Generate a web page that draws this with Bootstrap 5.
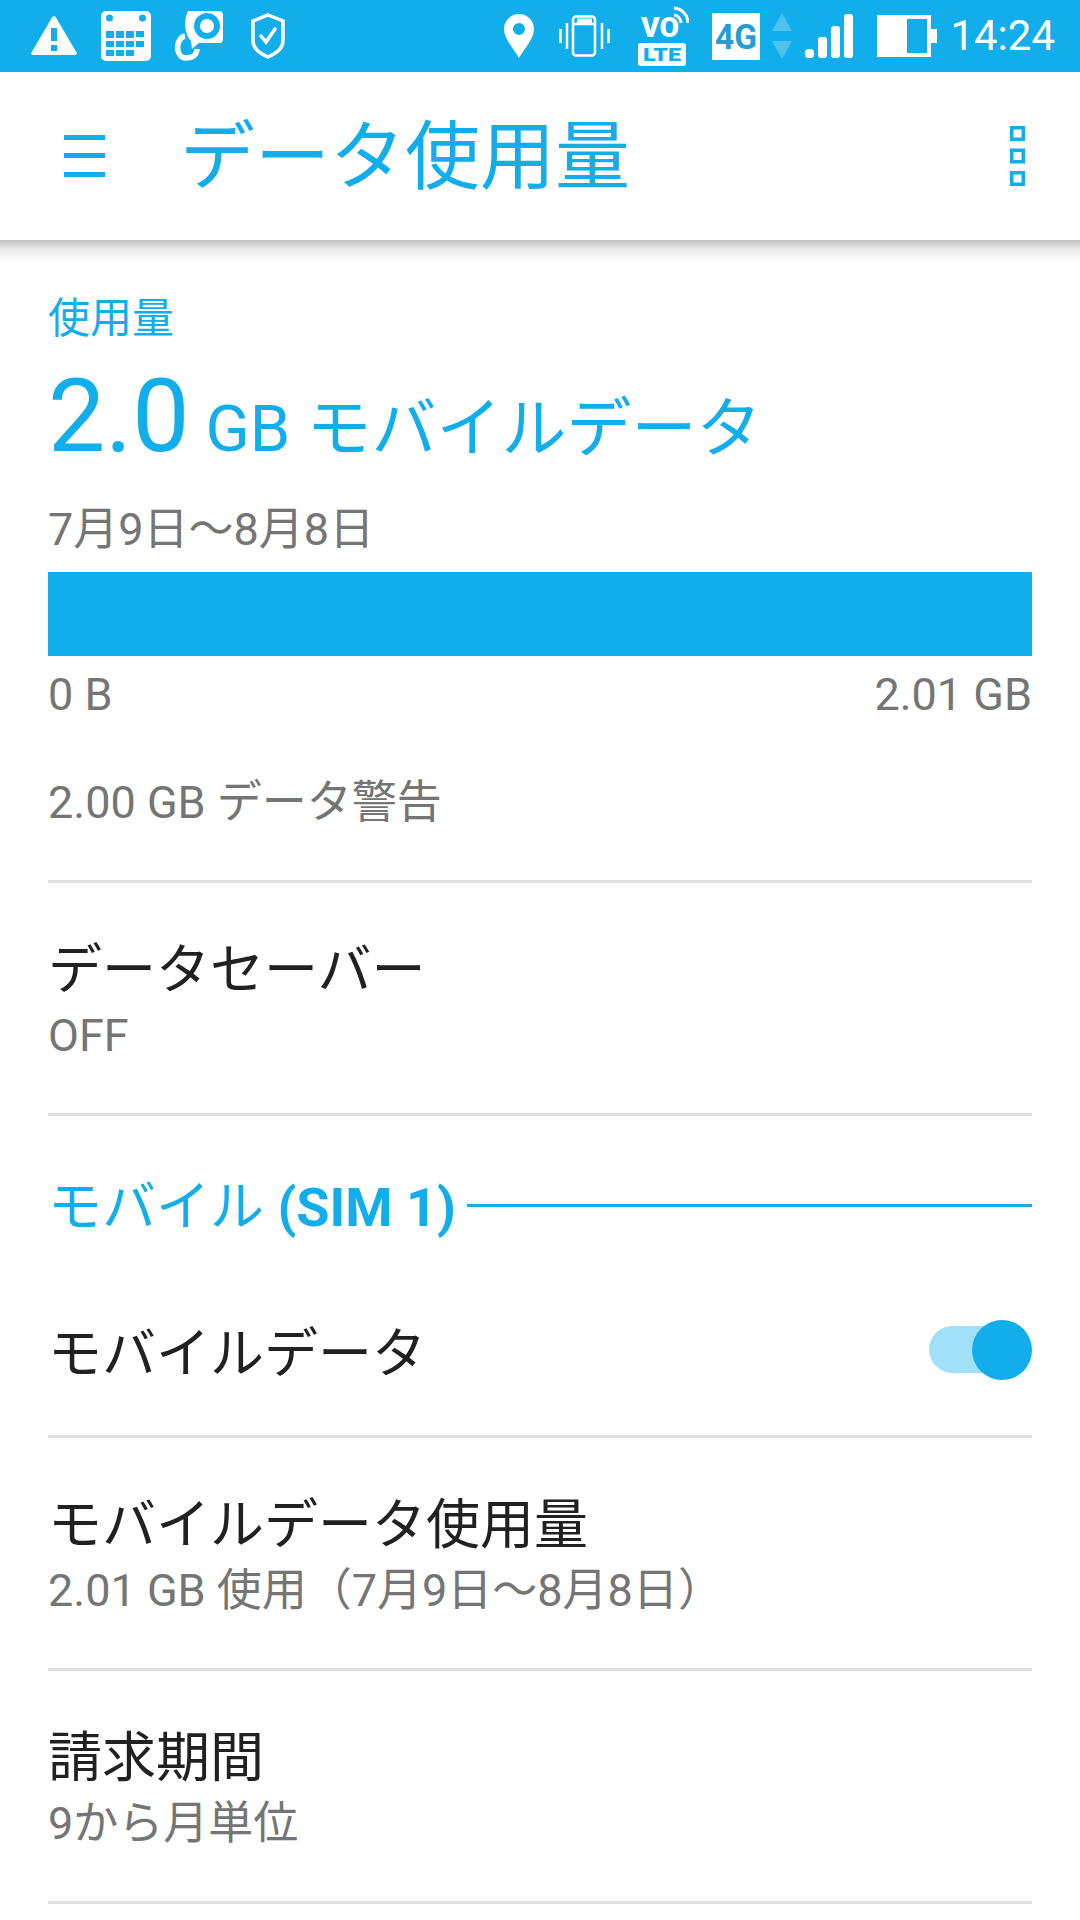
<!DOCTYPE html>
<html lang="ja">
<head>
  <meta charset="UTF-8" />
  <meta name="viewport" content="width=device-width, initial-scale=1.0" />
  <title>データ使用量</title>
  <link href="https://cdn.jsdelivr.net/npm/bootstrap@5.3.0/dist/css/bootstrap.min.css" rel="stylesheet">
  <style>
    body {
      width: 1080px;
      height: 1920px;
      overflow: hidden;
      background: #fff;
      font-family: Roboto, "Noto Sans CJK JP", sans-serif;
      color: #212121;
    }

    .status-bar {
      height: 72px;
      background: #12adeb;
      padding: 0 25px 0 31px;
    }

    .status-bar svg { display: block; flex: none; }
    .status-left { gap: 24px; }
    .gap-vibrate { margin-left: 25px; }
    .gap-volte { margin-left: 28px; }
    .gap-4g { margin-left: 23px; }
    .gap-arrows { margin-left: 12px; }
    .gap-signal { margin-left: 13px; }
    .gap-battery { margin-left: 24px; }
    .clock { color: #fff; font-size: 42px; line-height: 72px; margin-left: 13px; }

    .app-bar {
      height: 168px;
      padding: 0 55px 0 64px;
      position: relative;
    }

    .app-bar::after {
      content: "";
      position: absolute;
      left: 0;
      right: 0;
      top: 100%;
      height: 22px;
      background: linear-gradient(rgba(0, 0, 0, .24), rgba(0, 0, 0, .09) 40%, rgba(0, 0, 0, 0));
    }

    .app-title { color: #12adeb; font-size: 75px; line-height: 1; margin: 2px 0 0 75px; font-weight: 400; }

    .usage-block { padding: 56px 48px 0; height: 640px; }
    .usage-label { color: #12adeb; font-size: 42px; line-height: 46px; }
    .usage-total { color: #12adeb; font-size: 65px; line-height: 108px; margin-top: 20px; }
    .usage-total b { font-size: 102px; font-weight: 400; margin-right: 16px; }
    .usage-range { color: #757575; font-size: 45px; line-height: 52px; margin-top: 21px; }
    .usage-bar { height: 84px; background: #12adeb; margin-top: 16px; }
    .usage-scale { color: #757575; font-size: 45px; line-height: 52px; margin-top: 13px; }
    .usage-warn { color: #757575; font-size: 45px; line-height: 52px; margin-top: 56px; }

    .setting-list { padding: 0 48px; }
    .setting-row { border-top: 3px solid #e0e0e0; height: 233px; padding-top: 56px; }
    .setting-row.plain { height: 0; padding: 0; }
    .setting-name { font-size: 54px; line-height: 64px; }
    .setting-sub { color: #757575; font-size: 45px; line-height: 52px; margin-top: 7px; }

    .section-head { height: 157px; padding: 60px 0 33px; gap: 11px; }
    .section-title { color: #12adeb; font-size: 54px; line-height: 64px; }
    .section-title b { font-weight: 700; }
    .section-line { height: 3px; background: #12adeb; flex: 1; margin-bottom: 5px; }
    .switch-row { height: 162px; padding-bottom: 9px; }
    .switch-name { padding-top: 10px; }
    .switch-track { width: 99px; height: 47px; background: #a0e0f8; border-radius: 24px; position: relative; }
    .switch-knob { width: 60px; height: 60px; background: #12adeb; border-radius: 50%; position: absolute; right: -4px; top: -6px; }
  </style>
</head>
<body>
  <div class="status-bar d-flex justify-content-between align-items-center">
    <div class="status-left d-flex align-items-center">
      <!-- warning -->
      <svg width="46" height="40" viewBox="0 0 46 40"><path fill="#fff" fill-rule="evenodd" d="M21 1.500a2.300 2.300 0 0 1 4 0L45.500 36.500a1.700 1.700 0 0 1-1.500 2.500H2a1.700 1.700 0 0 1-1.500-2.500ZM20 12v13h6V12ZM20 29v6h6v-6Z"/></svg>
      <!-- calendar -->
      <svg width="50" height="50" viewBox="0 0 50 50"><path fill="#fff" fill-rule="evenodd" d="M5 0H45a5 5 0 0 1 5 5V45a5 5 0 0 1-5 5H5a5 5 0 0 1-5-5V5a5 5 0 0 1 5-5ZM5 7a3.500 3.500 0 1 0 7 0 3.500 3.500 0 1 0-7 0ZM38 7a3.500 3.500 0 1 0 7 0 3.500 3.500 0 1 0-7 0ZM5 20v7h8v-7ZM15 20v7h8v-7ZM25 20v7h8v-7ZM35 20v6h8v-6ZM5 30v6h8v-6ZM15 30v6h8v-6ZM25 30v6h8v-6ZM35 30v6h8v-6ZM5 39v6h8v-6ZM15 39v6h8v-6ZM25 39v6h8v-6Z"/></svg>
      <!-- hook -->
      <svg width="48" height="50" viewBox="0 0 48 50"><path fill="#fff" fill-rule="evenodd" d="M13 0H44a4 4 0 0 1 4 4V28a4 4 0 0 1-4 4H24l-7 6-1-8C10 24 8 10 13 0ZM19 15a13 13 0 1 0 26 0 13 13 0 1 0-26 0ZM25 15a7 7 0 1 1 14 0 7 7 0 1 1-14 0Z"/><path fill="none" stroke="#fff" stroke-width="5.500" d="M10 25C0 27 0 47 11 47c7 0 11-4 11-9"/></svg>
      <!-- shield -->
      <svg class="ms-1" width="34" height="46" viewBox="0 0 34 46"><path fill="none" stroke="#fff" stroke-width="3.500" d="M17 2 32 8V28C32 36 24 41 17 44 10 41 2 36 2 28V8Z"/><path fill="none" stroke="#fff" stroke-width="3.500" stroke-linecap="round" d="M10 23l5 6 9-13"/></svg>
    </div>
    <div class="d-flex align-items-center">
      <!-- location -->
      <svg width="30" height="44" viewBox="0 0 30 44"><path fill="#fff" fill-rule="evenodd" d="M15 0A15 15 0 0 1 30 15C30 25 20 35 15 44 10 35 0 25 0 15A15 15 0 0 1 15 0ZM9 15a6 6 0 1 0 12 0 6 6 0 1 0-12 0Z"/></svg>
      <!-- vibrate -->
      <svg class="gap-vibrate" width="51" height="42" viewBox="0 0 51 42"><g fill="none" stroke="#fff" stroke-width="2.500"><rect x="14" y="1.500" width="22" height="39" rx="3"/><path d="M14 9H36M1.500 14V28M8 8V34M43 8V34M49.500 14V28"/></g><path fill="#fff" d="M18 3.500h15V8H18Z"/></svg>
      <!-- volte -->
      <svg class="gap-volte" width="51" height="60" viewBox="0 0 51 60" font-family="Roboto, sans-serif" font-weight="900"><text x="3" y="31" font-size="28" fill="#fff" textLength="38" lengthAdjust="spacingAndGlyphs">VO</text><path fill="none" stroke="#fff" stroke-width="3" d="M36 9a8 8 0 0 1 7 8M36 2a15 15 0 0 1 14 15"/><rect y="37" x="0" width="48" height="23" rx="3" fill="#fff"/><text x="24" y="55" font-size="18" fill="#12adeb" text-anchor="middle" textLength="38" lengthAdjust="spacingAndGlyphs">LTE</text></svg>
      <!-- 4g -->
      <svg class="gap-4g" width="48" height="47" viewBox="0 0 48 47" font-family="Roboto, sans-serif" font-weight="700"><rect width="48" height="47" fill="#fff"/><text x="24" y="36" font-size="35" fill="#1f9fd6" text-anchor="middle" textLength="42" lengthAdjust="spacingAndGlyphs">4G</text></svg>
      <!-- up down -->
      <svg class="gap-arrows" width="20" height="46" viewBox="0 0 20 46"><path fill="#4dc3f2" d="M10 0 20 18H0ZM0 28H20L10 46Z"/></svg>
      <!-- signal -->
      <svg class="gap-signal" width="48" height="44" viewBox="0 0 48 44"><g fill="#fff"><rect y="35" width="9" height="9" rx="3.500"/><rect x="13" y="23" width="9" height="21" rx="3"/><rect x="26" y="12" width="9" height="32" rx="3"/><rect x="39" y="0" width="9" height="44" rx="3"/></g></svg>
      <!-- battery -->
      <svg class="gap-battery" width="60" height="42" viewBox="0 0 60 42"><path fill="#fff" fill-rule="evenodd" d="M0 0H54V14H60V28H54V42H0ZM30 4V38H50V4Z"/></svg>
      <span class="clock">14:24</span>
    </div>
  </div>

  <div class="app-bar d-flex align-items-center">
    <svg width="41" height="42" viewBox="0 0 41 42"><g fill="#12adeb"><rect width="41" height="5"/><rect y="18" width="41" height="5"/><rect y="37" width="41" height="5"/></g></svg>
    <h1 class="app-title">データ使用量</h1>
    <svg class="ms-auto" width="15" height="60" viewBox="0 0 15 60"><g fill="none" stroke="#12adeb" stroke-width="3.500"><rect x="1.750" y="1.750" width="11.500" height="11.500"/><rect x="1.750" y="24.250" width="11.500" height="11.500"/><rect x="1.750" y="46.750" width="11.500" height="11.500"/></g></svg>
  </div>

  <div class="usage-block">
    <div class="usage-label">使用量</div>
    <div class="usage-total"><b>2.0</b>GB モバイルデータ</div>
    <div class="usage-range">7月9日〜8月8日</div>
    <div class="usage-bar"></div>
    <div class="usage-scale d-flex justify-content-between"><span>0 B</span><span>2.01 GB</span></div>
    <div class="usage-warn">2.00 GB データ警告</div>
  </div>

  <div class="setting-list">
    <div class="setting-row">
      <div class="setting-name">データセーバー</div>
      <div class="setting-sub">OFF</div>
    </div>
    <div class="setting-row plain"></div>
    <div class="section-head d-flex">
      <div class="section-title">モバイル <b>(SIM 1)</b></div>
      <div class="section-line align-self-center"></div>
    </div>
    <div class="switch-row d-flex justify-content-between align-items-center">
      <div class="setting-name switch-name">モバイルデータ</div>
      <div class="switch-track me-1"><div class="switch-knob"></div></div>
    </div>
    <div class="setting-row">
      <div class="setting-name">モバイルデータ使用量</div>
      <div class="setting-sub">2.01 GB 使用（7月9日〜8月8日）</div>
    </div>
    <div class="setting-row">
      <div class="setting-name">請求期間</div>
      <div class="setting-sub">9から月単位</div>
    </div>
    <div class="setting-row plain"></div>
  </div>

  <script src="https://cdn.jsdelivr.net/npm/bootstrap@5.3.0/dist/js/bootstrap.bundle.min.js"></script>
</body>
</html>
